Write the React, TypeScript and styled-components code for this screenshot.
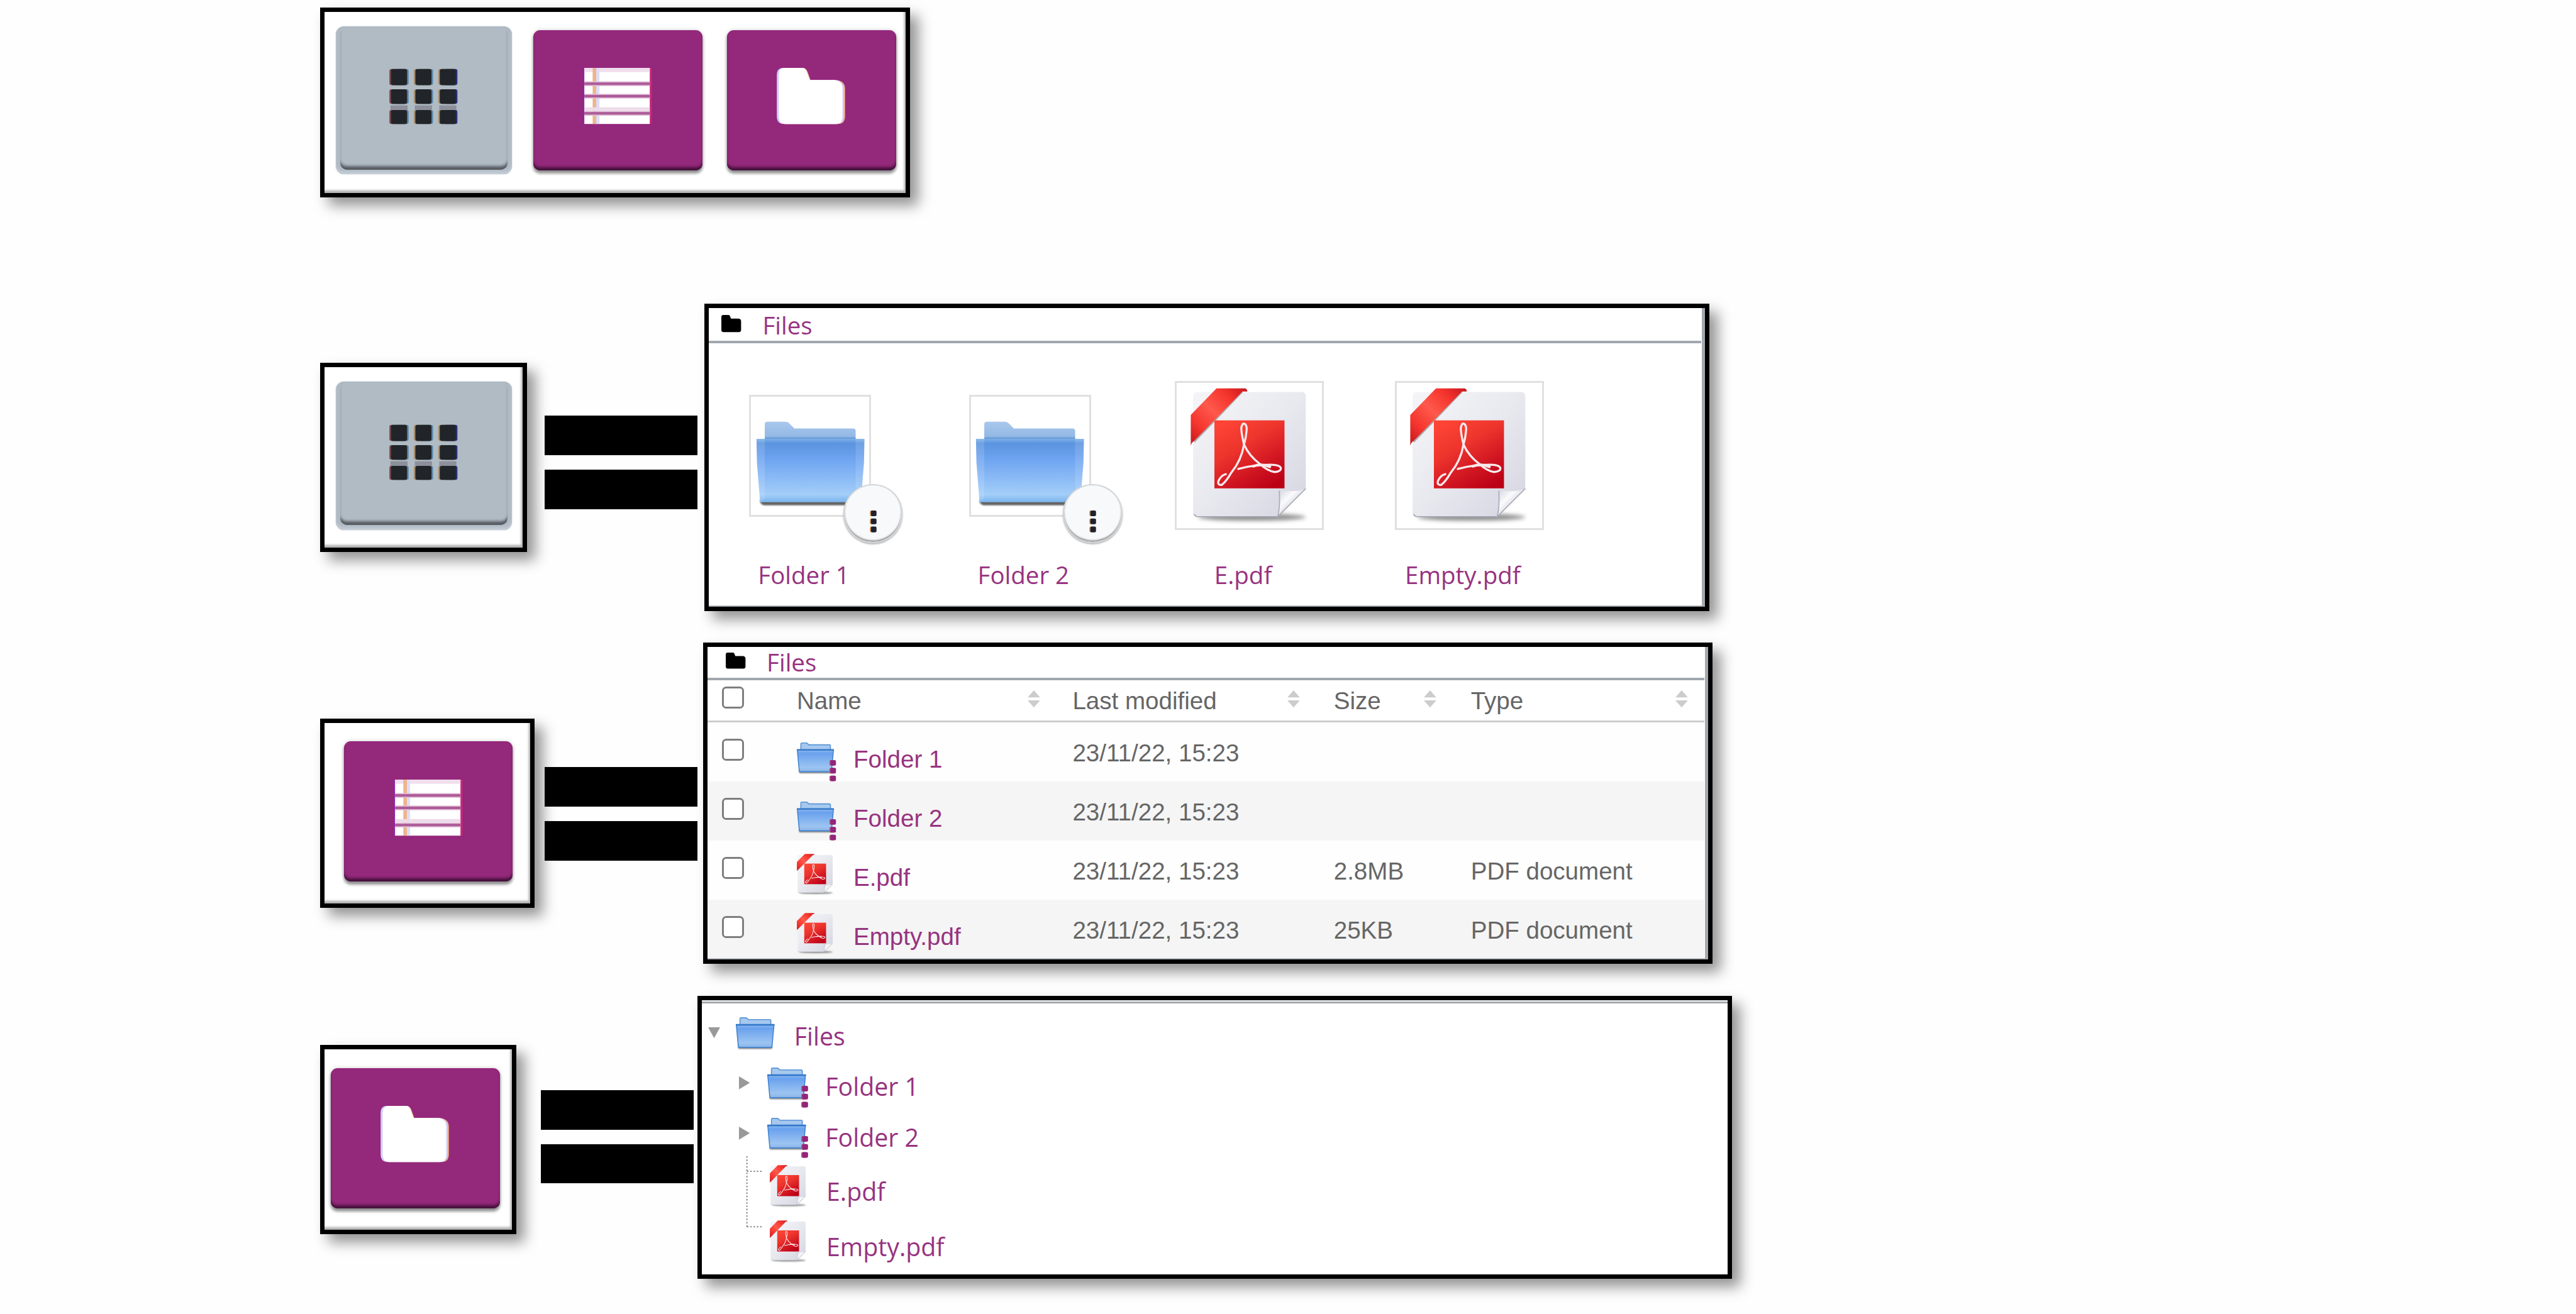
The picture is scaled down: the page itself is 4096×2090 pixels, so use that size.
import React from 'react';
import styled, { createGlobalStyle, css } from 'styled-components';

/* Every length is written in sheet units; the sheet is drawn at this scale. */
const SCALE = 0.82568;
const u = (n: number) => `${+(n * SCALE).toFixed(3)}px`;

const purple = '#973380';
const grey = '#666';
const humanist = css`font-family: 'Open Sans', 'Noto Sans', sans-serif;`;
const grotesk = css`font-family: 'Liberation Sans', Arial, sans-serif;`;

const GlobalStyle = createGlobalStyle`
  * { box-sizing: border-box; }
  body { margin: 0; background: #fff; overflow: hidden; }
`;

const Sheet = styled.main`
  width: 4096px;
  height: 2090px;
  padding: ${u(15)} 0 0 ${u(617)};
  background: #fefefe;
  display: flex;
  flex-direction: column;
  align-items: flex-start;
`;

const Example = styled.section<{ $gap: number }>`
  display: flex;
  align-items: flex-start;
  margin-top: ${p => u(p.$gap)};
`;

const Frame = styled.div<{ $w: number; $h: number; $top?: number }>`
  flex: none;
  width: ${p => u(p.$w)};
  height: ${p => u(p.$h)};
  margin-top: ${p => u(p.$top ?? 0)};
  border: 7px solid #000;
  background: #fff;
  box-shadow: ${u(16)} ${u(16)} ${u(25)} rgba(0, 0, 0, 0.42);
`;

const ButtonFrame = styled(Frame)<{ $pl: number; $pt: number }>`
  display: flex;
  align-items: flex-start;
  padding: ${p => u(p.$pt)} 0 0 ${p => u(p.$pl)};
  box-shadow: ${u(16)} ${u(16)} ${u(25)} rgba(0, 0, 0, 0.42),
    inset ${u(-3)} ${u(-5)} ${u(4)} rgba(0, 0, 0, 0.3);
`;

const PurpleButton = styled.div<{ $ml?: number; $shift?: number }>`
  width: ${u(325)};
  height: ${u(270)};
  margin-left: ${p => u(p.$ml ?? 0)};
  padding: ${u(73)} 0 0 ${p => u(93 + (p.$shift ?? 0))};
  border-radius: ${u(13)};
  background: #94287b;
  box-shadow: inset 0 ${u(-8)} ${u(5)} ${u(-2)} #43103a, 0 ${u(5)} ${u(5)} rgba(0, 0, 0, 0.4),
    0 0 ${u(8)} rgba(0, 0, 0, 0.2);
`;

const GreyButton = styled.div`
  width: ${u(340)};
  height: ${u(285)};
  padding: ${u(2)} ${u(9)} ${u(9)};
  border-radius: ${u(16)};
  background: #b0bac4;
  box-shadow: inset 0 ${u(-5)} ${u(5)} #c6ced7, inset 0 0 ${u(6)} #a8b4c1, 0 0 ${u(3)} #c5ced7;
`;

const GreyFace = styled.div`
  height: 100%;
  padding: ${u(80)} 0 0 ${u(95)};
  border-radius: ${u(13)};
  background: #b0bbc4;
  box-shadow: inset 0 ${u(-9)} ${u(5)} ${u(-2)} #565a60;
`;

const Drawing = styled.svg<{ $w: number; $h: number }>`
  display: block;
  flex: none;
  overflow: visible;
  width: ${p => u(p.$w)};
  height: ${p => u(p.$h)};
`;

const Equals = styled.div<{ $ml: number; $top: number; $mr: number }>`
  flex: none;
  display: grid;
  gap: ${u(28)};
  margin: ${p => u(p.$top)} ${p => u(p.$mr)} 0 ${p => u(p.$ml)};
`;

const Bar = styled.i`
  width: ${u(294)};
  height: ${u(76)};
  background: #000;
`;

const Viewer = styled(Frame)<{ $line: boolean }>`
  display: flex;
  flex-direction: column;
  ${p => p.$line && css`
    padding-right: ${u(7)};
    box-shadow: ${u(16)} ${u(16)} ${u(25)} rgba(0, 0, 0, 0.42),
      inset ${u(-6)} ${u(-2)} 0 #a3a9af;
  `}
`;

const PathBar = styled.div<{ $h: number; $pl: number; $lh: number; $icon: number }>`
  flex: none;
  display: flex;
  align-items: flex-start;
  height: ${p => u(p.$h)};
  padding-left: ${p => u(p.$pl)};
  border-bottom: 4px solid #a1a7ad;
  line-height: ${p => u(p.$lh)};
  svg { margin: ${p => u(p.$icon)} ${u(41)} 0 0; }
`;

const Link = styled.span<{ $size?: number }>`
  ${humanist}
  color: ${purple};
  font-size: ${p => u(p.$size ?? 46.6)};
  white-space: nowrap;
`;

/* Icon view */
const Gallery = styled.div`
  display: grid;
  grid-template-columns: repeat(4, ${u(423)});
  padding-top: ${u(73)};
  margin-left: ${u(-28)};
`;

const Tile = styled.figure`
  margin: 0;
  display: flex;
  flex-direction: column;
  align-items: center;
`;

const ThumbArea = styled.div`
  height: ${u(287)};
  margin-left: ${u(25)};
  display: grid;
  place-items: center;
`;

const Thumb = styled.div<{ $size: number; $pl: number; $pt: number }>`
  position: relative;
  width: ${p => u(p.$size)};
  height: ${p => u(p.$size)};
  padding: ${p => u(p.$pt)} 0 0 ${p => u(p.$pl)};
  border: 3px solid #e0e0e0;
  background: #fff;
`;

const MenuBadge = styled.span`
  position: absolute;
  left: ${u(177)};
  top: ${u(169)};
  width: ${u(115)};
  height: ${u(113)};
  padding: ${u(48)} 0 0 ${u(49)};
  border-radius: 50%;
  background: #f8f9fb;
  border: 2px solid #d3d6d9;
  box-shadow: inset 0 ${u(-3)} ${u(3)} rgba(0, 0, 0, 0.4), 0 ${u(2)} ${u(3)} rgba(0, 0, 0, 0.3);
`;

const Caption = styled.figcaption`
  margin-top: ${u(54)};
  line-height: ${u(64)};
`;

/* List view */
const columns = css`
  display: grid;
  grid-template-columns: ${u(172)} ${u(531)} ${u(503)} ${u(264)} 1fr;
`;

const HeadRow = styled.div`
  ${columns}
  ${grotesk}
  flex: none;
  height: ${u(81)};
  border-bottom: 3px solid #cdcdcd;
  font-size: ${u(46.7)};
  line-height: ${u(80)};
  color: ${grey};
`;

const HeadCell = styled.div<{ $pr: number }>`
  display: flex;
  justify-content: space-between;
  padding-right: ${p => u(p.$pr)};
  white-space: nowrap;
  svg { margin-top: ${u(19)}; }
`;

const Row = styled.div<{ $odd: boolean }>`
  ${columns}
  ${grotesk}
  flex: none;
  height: ${u(113.8)};
  background: ${p => (p.$odd ? '#f5f5f5' : '#fefefe')};
  font-size: ${u(46.7)};
  line-height: ${u(119)};
  color: ${grey};
  &:last-child { height: ${u(113)}; }
`;

const Checkbox = styled.i<{ $top: number }>`
  width: ${u(42)};
  height: ${u(42)};
  margin: ${p => u(p.$top)} 0 0 ${u(28)};
  border: 3px solid #7e7e7e;
  border-radius: ${u(8)};
  background: #fff;
`;

const NameCell = styled.div`
  display: flex;
  color: ${purple};
  line-height: ${u(144)};
`;

const IconSlot = styled.span<{ $w: number; $top: number }>`
  flex: none;
  width: ${p => u(p.$w)};
  padding-top: ${p => u(p.$top)};
`;

/* Tree view */
const Tree = styled.div`
  position: relative;
  border-top: 3px solid #a1a7ad;
  margin-top: 2px;
`;

const TreeRow = styled.div<{ $h: number; $pl: number; $lh: number }>`
  display: flex;
  height: ${p => u(p.$h)};
  padding-left: ${p => u(p.$pl)};
  line-height: ${p => u(p.$lh)};
`;

const Guides = styled(Drawing)`
  position: absolute;
  left: ${u(85)};
  top: ${u(294)};
`;

const GridIcon = () => (
  <Drawing $w={131} $h={107} viewBox="0 0 131 107">
    {[0, 47, 94].map(x => (
      <g key={x}>
        <rect x={x + 1} y="71" width="33" height="13" fill="#8d8f9b" />
        {[[1, 31], [40, 28], [80, 27]].map(([y, h]) => (
          <g key={y}>
            <rect x={x - 1} y={y} width="34" height={h} rx="4" fill={x ? '#a8906c' : '#7a4a50'} />
            <rect x={x + 10} y={y} width="26" height={h} rx="4" fill={x === 94 ? '#28307a' : '#5484a6'} />
            <rect x={x + 2} y={y} width="31" height={h} rx="4" fill="#212529" />
          </g>
        ))}
      </g>
    ))}
  </Drawing>
);

const ListIcon = () => (
  <Drawing $w={137} $h={109} viewBox="0 0 137 109">
    <rect x="2" width="6" height="108" fill="#8f26a4" />
    <rect x="129" width="6" height="108" fill="#c82679" />
    <rect x="5" width="126" height="108" fill="#fff" />
    <rect x="5" width="126" height="8" fill="#f1dfed" />
    <rect x="21" width="7" height="108" fill="#f0b48a" />
    <rect x="28" width="6" height="108" fill="#dcdcfc" />
    {[30, 54, 87].map(y => (
      <g key={y}>
        <rect x="5" y={y - 4} width="126" height="9" fill="#dfbcd7" />
        <rect x="5" y={y - 2} width="126" height="5" fill="#ad5b97" />
      </g>
    ))}
    <rect x="5" y="76" width="126" height="7" fill="#eddce9" />
  </Drawing>
);

const folderPath = 'M12 0H48Q54 0 57 7L63 23H112Q130 24 130 40V92Q130 107 116 107H14Q0 107 0 92V14Q0 0 12 0Z';

const FolderGlyph = ({ w, h, fill }: { w: number; h: number; fill: string }) => (
  <Drawing $w={w} $h={h} viewBox="0 0 130 107" preserveAspectRatio="none">
    {fill === '#fff' && <path d={folderPath} fill="#efb08c" transform="translate(1.500 0)" />}
    {fill === '#fff' && <path d={folderPath} fill="#cfcffb" transform="translate(-1 0)" />}
    <path d={folderPath} fill={fill} transform={fill === '#fff' ? 'translate(3 0) scale(.95 1)' : undefined} />
  </Drawing>
);

const Dots = ({ fill, fringe }: { fill: string; fringe: string }) => (
  <g>
    {[0, 15.5, 31].map(y => (
      <g key={y}>
        <rect y={y} width="10" height="11" rx="2.500" fill={fringe} />
        <rect x="2" y={y} width="11" height="11" rx="2.500" fill={fill} />
      </g>
    ))}
  </g>
);

const BigFolder = () => (
  <Drawing $w={210} $h={162} viewBox="0 0 210 162">
    <defs>
      <linearGradient id="bigFront" x1="0" y1="0" x2="0" y2="1">
        <stop offset="0" stopColor="#7db0e9" />
        <stop offset=".07" stopColor="#5b94df" />
        <stop offset=".32" stopColor="#6ea4f1" />
        <stop offset=".88" stopColor="#a3cef9" />
        <stop offset="1" stopColor="#7bb5ed" />
      </linearGradient>
      <linearGradient id="bigBack" x1="0" y1="0" x2="0" y2="1">
        <stop offset="0" stopColor="#a9c8ec" />
        <stop offset=".85" stopColor="#93b9e5" />
        <stop offset="1" stopColor="#5e94d3" />
      </linearGradient>
      <filter id="bigBlur" x="-10%" y="-100%" width="120%" height="300%">
        <feGaussianBlur stdDeviation="1.600" />
      </filter>
    </defs>
    <path d="M8 152H204L200 159Q199 162 194 162H17Q11 162 8 156Z" fill="#4a4a4a" opacity=".85" filter="url(#bigBlur)" />
    <path d="M17 34V6Q17 1 22 1H57Q61 1 64 4L74 14H187Q192 14 192 19V34Z" fill="url(#bigBack)" />
    <path d="M1 34H209L208 80L202 156H8L2 80Z" fill="url(#bigFront)" />
    <path d="M1 34H17V148L8 156L2 80ZM192 34H209L208 80L202 156L192 148Z" fill="#fff" opacity=".13" />
  </Drawing>
);

const SmallFolder = ({ w = 74.5, h = 63, menu = false }: { w?: number; h?: number; menu?: boolean }) => (
  <Drawing $w={w} $h={h} viewBox="0 0 74 63" preserveAspectRatio="none">
    <defs>
      <linearGradient id="smallFront" x1="0" y1="0" x2="0" y2="1">
        <stop offset="0" stopColor="#8db9f1" />
        <stop offset=".15" stopColor="#6aa1ee" />
        <stop offset=".8" stopColor="#9cc4f1" />
        <stop offset="1" stopColor="#8ab5e8" />
      </linearGradient>
      <filter id="smallBlur" x="-10%" y="-100%" width="120%" height="300%">
        <feGaussianBlur stdDeviation="1.200" />
      </filter>
    </defs>
    <path d="M5 55H69V61H5Z" fill="#555" opacity=".8" filter="url(#smallBlur)" />
    <path d="M8 15V3Q8 1 10 1H20L24 4.500H65Q67 4.500 67 6.500V15Z" fill="#a6c8ef" stroke="#5b95d6" strokeWidth="2" />
    <path d="M1 15H73L69 58H5Z" fill="url(#smallFront)" stroke="#4586d0" strokeWidth="2" />
    <path d="M0 14.500H74" stroke="#3377c8" strokeWidth="3" />
    {menu && (
      <g transform="translate(65 35)">
        <Dots fill="#93257b" fringe="#b05a80" />
      </g>
    )}
  </Drawing>
);

const PdfIcon = ({ w, h }: { w: number; h: number }) => (
  <Drawing $w={w} $h={h} viewBox="29 12 225 261" preserveAspectRatio="none">
    <defs>
      <linearGradient id="page" x1="0" y1="0" x2="1" y2="1">
        <stop offset="0" stopColor="#f5f5f8" />
        <stop offset=".5" stopColor="#e8e9ef" />
        <stop offset="1" stopColor="#d3d4df" />
      </linearGradient>
      <linearGradient id="plate" x1=".2" y1="0" x2=".8" y2="1">
        <stop offset="0" stopColor="#fd4435" />
        <stop offset=".35" stopColor="#ee352d" />
        <stop offset=".75" stopColor="#cd1220" />
        <stop offset="1" stopColor="#bb0016" />
      </linearGradient>
      <linearGradient id="ribbon" x1="0" y1="1" x2="1" y2="0">
        <stop offset="0" stopColor="#c3161d" />
        <stop offset=".25" stopColor="#f5362e" />
        <stop offset=".5" stopColor="#ff584c" />
        <stop offset=".75" stopColor="#f5362e" />
        <stop offset="1" stopColor="#c8161d" />
      </linearGradient>
      <linearGradient id="curl" x1="0" y1="0" x2="1" y2="1">
        <stop offset="0" stopColor="#cfd0da" />
        <stop offset=".35" stopColor="#fbfbfd" />
        <stop offset=".6" stopColor="#d5d6df" />
        <stop offset="1" stopColor="#b5b6c2" />
      </linearGradient>
      <filter id="pageBlur" x="-10%" y="-100%" width="120%" height="300%">
        <feGaussianBlur stdDeviation="4" />
      </filter>
    </defs>
    <ellipse cx="147" cy="261" rx="104" ry="7" fill="#555" opacity=".65" filter="url(#pageBlur)" />
    <path d="M42 20H243Q251 20 251 28V206L197 260H42Q34 260 34 252V28Q34 20 42 20Z" fill="url(#page)" />
    <path d="M36 255Q38 260 43 260H197" fill="none" stroke="#a2a3b2" strokeWidth="2" />
    <path d="M251 206Q240 213 200 210Q202 240 197 260Z" fill="url(#curl)" />
    <path d="M200 210Q202 240 197 260L251 206" fill="none" stroke="#a9aab7" strokeWidth="2" />
    <path d="M129 19L36 116" stroke="#555" strokeWidth="3" opacity=".45" />
    <path d="M79 13H134Q138 14 138.500 19H129L36 114Q30 118 29.500 124V64Z" fill="url(#ribbon)" />
    <rect x="75" y="74.500" width="135" height="131" fill="url(#plate)" />
    <g fill="none" stroke="#f8e9ec" strokeWidth="4" strokeLinecap="round" strokeLinejoin="round">
      <path d="M132 121Q126 96 127 88Q129 79 133 81Q138 84 137 94Q136 108 132 121Q127 152 107 176Q98 192 89 199Q80 199 83 191Q88 180 97 178" />
      <path d="M132 121Q142 143 162 158Q177 172 191 174Q204 173 203 166Q200 160 182 160Q150 160 121 168" />
      <path d="M150 163Q165 157 182 164" strokeWidth="5" />
    </g>
  </Drawing>
);

const SortIcon = () => (
  <Drawing $w={24} $h={33} viewBox="0 0 24 33">
    <path d="M12 0L24 13.500H0ZM12 33L24 19.500H0Z" fill="#ccc" />
  </Drawing>
);

const Arrow = ({ open = false }: { open?: boolean }) => (
  <Drawing $w={open ? 23 : 21} $h={open ? 21 : 25} viewBox={open ? '0 0 23 21' : '0 0 21 25'}>
    <path d={open ? 'M0 0H23L11.500 21Z' : 'M0 0L21 12.500L0 25Z'} fill="#999" />
  </Drawing>
);

const BadgeDots = () => (
  <Drawing $w={13} $h={42} viewBox="0 0 13 42">
    <Dots fill="#1e2230" fringe="#eba45f" />
  </Drawing>
);

const EqualsSign = (p: { ml: number; top: number; mr: number }) => (
  <Equals $ml={p.ml} $top={p.top} $mr={p.mr}><Bar /><Bar /></Equals>
);

const GridButton = () => <GreyButton><GreyFace><GridIcon /></GreyFace></GreyButton>;
const ListButton = ({ ml }: { ml?: number }) => <PurpleButton $ml={ml}><ListIcon /></PurpleButton>;
const FolderButton = ({ ml }: { ml?: number }) => (
  <PurpleButton $ml={ml} $shift={4}><FolderGlyph w={129} h={108} fill="#fff" /></PurpleButton>
);

const ButtonPair = styled.div`
  display: flex;
  margin: ${u(7.5)} 0 0 ${u(41)};
`;

type File = { name: string; folder?: boolean; size?: string; type?: string };
const files: File[] = [
  { name: 'Folder 1', folder: true },
  { name: 'Folder 2', folder: true },
  { name: 'E.pdf', size: '2.8MB', type: 'PDF document' },
  { name: 'Empty.pdf', size: '25KB', type: 'PDF document' },
];

const treeRows = [
  { name: 'Files', h: 97, pl: 12, arrow: 45, icon: 26, lh: 127, gap: 30, text: 113 },
  { name: 'Folder 1', h: 97, pl: 72, arrow: 43, icon: 26, lh: 127, gap: 33, text: 112 },
  { name: 'Folder 2', h: 90, pl: 72, arrow: 43, icon: 26, lh: 127, gap: 33, text: 112 },
  { name: 'E.pdf', h: 107, pl: 131, arrow: 0, icon: 27, lh: 157, gap: 0, text: 109 },
  { name: 'Empty.pdf', h: 107, pl: 131, arrow: 0, icon: 27, lh: 157, gap: 0, text: 109 },
];

export default function App() {
  return (
    <>
      <GlobalStyle />
      <Sheet>
        <Example $gap={0}>
          <ButtonFrame $w={1136} $h={365} $pl={21} $pt={27}>
            <GridButton />
            <ButtonPair>
              <ListButton />
              <FolderButton ml={48} />
            </ButtonPair>
          </ButtonFrame>
        </Example>

        <Example $gap={205}>
          <ButtonFrame $w={398} $h={365} $top={114} $pl={21} $pt={28}>
            <GridButton />
          </ButtonFrame>
          <EqualsSign ml={34} top={216} mr={13} />
          <Viewer $w={1936} $h={592} $line>
            <PathBar $h={68} $pl={25} $lh={65.5} $icon={13}>
              <FolderGlyph w={38} h={33} fill="#000" />
              <Link>Files</Link>
            </PathBar>
            <Gallery>
              {files.map(f => (
                <Tile key={f.name}>
                  <ThumbArea>
                    {f.folder ? (
                      <Thumb $size={235} $pl={9} $pt={47}>
                        <BigFolder />
                        <MenuBadge><BadgeDots /></MenuBadge>
                      </Thumb>
                    ) : (
                      <Thumb $size={287} $pl={26} $pt={9}>
                        <PdfIcon w={225} h={261} />
                      </Thumb>
                    )}
                  </ThumbArea>
                  <Caption><Link>{f.name}</Link></Caption>
                </Tile>
              ))}
            </Gallery>
          </Viewer>
        </Example>

        <Example $gap={61}>
          <ButtonFrame $w={413} $h={365} $top={146} $pl={37} $pt={36}>
            <ListButton />
          </ButtonFrame>
          <EqualsSign ml={19} top={240} mr={11} />
          <Viewer $w={1944} $h={618.5} $line>
            <PathBar $h={64} $pl={35} $lh={59.5} $icon={11}>
              <FolderGlyph w={38} h={31} fill="#000" />
              <Link>Files</Link>
            </PathBar>
            <HeadRow>
              <Checkbox $top={12} />
              <HeadCell $pr={63}>Name<SortIcon /></HeadCell>
              <HeadCell $pr={65}>Last modified<SortIcon /></HeadCell>
              <HeadCell $pr={66}>Size<SortIcon /></HeadCell>
              <HeadCell $pr={32}>Type<SortIcon /></HeadCell>
            </HeadRow>
            {files.map((f, i) => (
              <Row key={f.name} $odd={i % 2 === 1}>
                <Checkbox $top={32} />
                <NameCell>
                  <IconSlot $w={109} $top={f.folder ? 39 : 26}>
                    {f.folder ? <SmallFolder w={71.5} h={61} menu /> : <PdfIcon w={70} h={79} />}
                  </IconSlot>
                  {f.name}
                </NameCell>
                <span>23/11/22, 15:23</span>
                <span>{f.size}</span>
                <span>{f.type}</span>
              </Row>
            ))}
          </Viewer>
        </Example>

        <Example $gap={62.5}>
          <ButtonFrame $w={377} $h={365} $top={94} $pl={12} $pt={36}>
            <FolderButton />
          </ButtonFrame>
          <EqualsSign ml={48} top={181} mr={7} />
          <Viewer $w={1992} $h={545} $line={false}>
            <Tree>
              {treeRows.map(r => (
                <TreeRow key={r.name} $h={r.h} $pl={r.pl} $lh={r.lh}>
                  {r.arrow > 0 && (
                    <IconSlot $w={(r.name === 'Files' ? 23 : 21) + r.gap} $top={r.arrow}>
                      <Arrow open={r.name === 'Files'} />
                    </IconSlot>
                  )}
                  <IconSlot $w={r.text} $top={r.icon}>
                    {r.name.endsWith('.pdf')
                      ? <PdfIcon w={70} h={81} />
                      : <SmallFolder menu={r.name !== 'Files'} />}
                  </IconSlot>
                  <Link $size={47.6}>{r.name}</Link>
                </TreeRow>
              ))}
              <Guides $w={32} $h={138} viewBox="0 0 32 138">
                <path d="M2 0V138M2 29H32M2 136H32" fill="none" stroke="#8c8c8c" strokeWidth="2.500" strokeDasharray="3 3.330" />
              </Guides>
            </Tree>
          </Viewer>
        </Example>
      </Sheet>
    </>
  );
}
